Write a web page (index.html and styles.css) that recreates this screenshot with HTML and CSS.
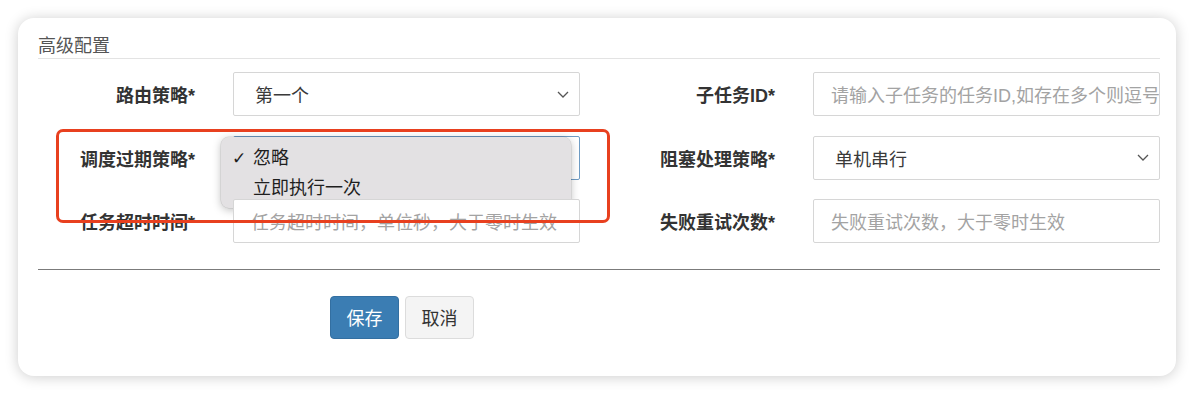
FILE: index.html
```html
<!DOCTYPE html>
<html lang="zh-CN">
<head>
<meta charset="utf-8">
<title>高级配置</title>
<link rel="stylesheet" href="styles.css">
</head>
<body>
<div class="card">
  <div class="legend">高级配置</div>
  <div class="grid">
    <div class="label">路由策略*</div>
    <div class="cell">
      <div class="select">第一个<svg class="chev" viewBox="0 0 12 7" width="12" height="7"><path d="M1 1 L6 6 L11 1" fill="none" stroke="#555" stroke-width="1.3"/></svg></div>
    </div>
    <div class="label">子任务ID*</div>
    <div class="cell"><div class="input placeholder">请输入子任务的任务ID,如存在多个则逗号分隔</div></div>

    <div class="label">调度过期策略*</div>
    <div class="cell">
      <div class="select focus">忽略<svg class="chev" viewBox="0 0 12 7" width="12" height="7"><path d="M1 1 L6 6 L11 1" fill="none" stroke="#555" stroke-width="1.3"/></svg></div>
      <div class="popup">
        <div class="opt"><span class="check">✓</span>忽略</div>
        <div class="opt">立即执行一次</div>
      </div>
    </div>
    <div class="label">阻塞处理策略*</div>
    <div class="cell">
      <div class="select">单机串行<svg class="chev" viewBox="0 0 12 7" width="12" height="7"><path d="M1 1 L6 6 L11 1" fill="none" stroke="#555" stroke-width="1.3"/></svg></div>
    </div>

    <div class="label">任务超时时间*</div>
    <div class="cell"><div class="input placeholder">任务超时时间，单位秒，大于零时生效</div></div>
    <div class="label">失败重试次数*</div>
    <div class="cell"><div class="input placeholder">失败重试次数，大于零时生效</div></div>
  </div>
  <div class="rule"></div>
  <div class="actions">
    <button class="btn primary">保存</button>
    <button class="btn default">取消</button>
  </div>
  <div class="annot"></div>
</div>
</body>
</html>
```

FILE: styles.css
```css
html, body {
  margin: 0;
  padding: 0;
  background: #ffffff;
  font-family: "Liberation Sans", "Noto Sans CJK SC", sans-serif;
  font-size: 17.5px;
  color: #333;
}
body {
  padding: 18px 19px 18px 18px;
}
.card {
  position: relative;
  background: #fff;
  border-radius: 16px;
  box-shadow: 0 1px 14px rgba(0, 0, 0, 0.2);
  padding: 16px 16px 38px 20px;
  height: 358px;
  box-sizing: border-box;
}
.legend {
  color: #555;
  font-size: 18px;
  line-height: 24px;
  border-bottom: 1px solid #e3e3e3;
}
.grid {
  margin-top: 13px;
  display: grid;
  grid-template-columns: 195px 347px 233px 347px;
  grid-auto-rows: 44px;
  row-gap: 19.5px;
}
.label {
  display: flex;
  align-items: center;
  justify-content: flex-end;
  padding-right: 38px;
  font-weight: bold;
  font-size: 18px;
  color: #333;
  white-space: nowrap;
}
.cell {
  position: relative;
}
.select, .input {
  box-sizing: border-box;
  height: 44px;
  border: 1px solid #d6d6d6;
  border-radius: 2px;
  display: flex;
  align-items: center;
  white-space: nowrap;
  overflow: hidden;
  background: #fff;
  font-size: 18px;
}
.select {
  padding: 0 10px 0 21px;
  color: #3a3a3a;
  justify-content: space-between;
}
.select.focus {
  border-color: #6f9cc4;
}
.chev {
  flex: none;
}
.input {
  padding: 0 17px;
}
.placeholder {
  color: #a3a3a3;
}
.popup {
  position: absolute;
  left: -12px;
  top: 1px;
  width: 350px;
  height: 71px;
  box-sizing: border-box;
  background: #e3e1e3;
  border-radius: 8px;
  box-shadow: 0 2px 8px rgba(0, 0, 0, 0.25), 0 0 0 0.5px rgba(0, 0, 0, 0.12);
  padding-top: 6px;
  font-size: 18px;
}
.opt {
  height: 30px;
  line-height: 30px;
  padding-left: 32px;
  position: relative;
  color: #1e1e1e;
}
.check {
  position: absolute;
  left: 11px;
  font-family: "DejaVu Sans", sans-serif;
  font-size: 17px;
  font-weight: bold;
}
.rule {
  margin-top: 25.5px;
  height: 0;
  border-top: 1.5px solid #7b7b7b;
}
.actions {
  margin-top: 26px;
  padding-left: 292px;
  display: flex;
  gap: 6px;
}
.btn {
  font-family: "Liberation Sans", "Noto Sans CJK SC", sans-serif;
  font-size: 18px;
  height: 43px;
  width: 69px;
  border-radius: 4px;
  padding: 0;
  cursor: pointer;
}
.btn.primary {
  background: #3b7db3;
  border: 1px solid #336fa1;
  color: #fff;
}
.btn.default {
  background: #f4f4f4;
  border: 1px solid #dcdcdc;
  color: #333;
}
.annot {
  position: absolute;
  left: 38px;
  top: 111px;
  width: 554px;
  height: 94px;
  box-sizing: border-box;
  border: 3px solid #e8401f;
  border-radius: 7px;
  pointer-events: none;
}
```
